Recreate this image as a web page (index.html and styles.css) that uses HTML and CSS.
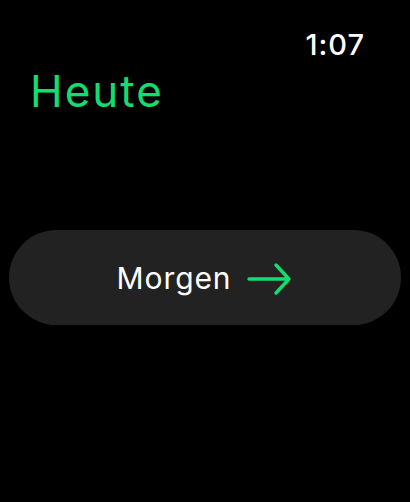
FILE: index.html
```html
<!DOCTYPE html>
<html lang="de">
<head>
<meta charset="utf-8">
<link rel="stylesheet" href="styles.css">
</head>
<body>
<div class="screen">
  <div class="status">
    <span class="time">1:07</span>
  </div>
  <h1 class="title">Heute</h1>
  <button class="next">
    <span class="label">Morgen</span>
    <svg class="arrow" width="46" height="34" viewBox="0 0 46 34" aria-hidden="true">
      <path d="M2 17 H42 M29 3 L42 17 L29 31" fill="none" stroke="#12dd6f" stroke-width="3.4" stroke-linecap="round" stroke-linejoin="round"/>
    </svg>
  </button>
</div>
</body>
</html>
```
FILE: styles.css
```css
html, body {
  margin: 0;
  padding: 0;
  background: #000;
}
.screen {
  width: 410px;
  height: 502px;
  background: #000;
  font-family: Inter, "Noto Sans", sans-serif;
  display: flex;
  flex-direction: column;
}
.status {
  display: flex;
  justify-content: flex-end;
  padding: 30px 45px 0 0;
}
.time {
  color: #fff;
  font-size: 29px;
  line-height: 29px;
  font-weight: 500;
  letter-spacing: 1px;
}
.title {
  margin: 10px 0 0 30px;
  color: #12dd6f;
  font-size: 44px;
  line-height: 44px;
  font-weight: 400;
  letter-spacing: 2px;
}
.next {
  margin: 117px 9px 0 9px;
  height: 95px;
  border: none;
  border-radius: 48px;
  background: #222222;
  display: flex;
  align-items: center;
  justify-content: center;
  gap: 16px;
  padding: 0;
  font-family: inherit;
}
.label {
  color: #fff;
  font-size: 30px;
  line-height: 30px;
  font-weight: 400;
  letter-spacing: 0.9px;
}
.arrow {
  display: block;
  margin-top: 2px;
}
```
